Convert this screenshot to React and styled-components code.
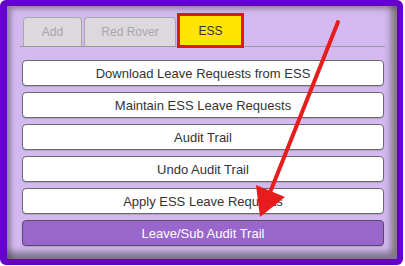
import React from "react";
import styled, { createGlobalStyle } from "styled-components";

const Global = createGlobalStyle`
  html, body { margin: 0; padding: 0; background: #ffffff; }
  body { font-family: "Liberation Sans", Arial, sans-serif; }
`;

const Frame = styled.div`
  position: relative;
  box-sizing: border-box;
  width: 403px;
  height: 265px;
  border: 6px solid #6600cc;
  border-left-width: 7px;
  border-radius: 6px;
  background: #d4b9f1;
  overflow: hidden;
`;

const Panel = styled.div`
  box-sizing: border-box;
  height: 100%;
  padding: 8px 12px 0 13px;
  box-shadow: inset 5px 4px 5px -1px rgba(60, 60, 60, 0.45),
    inset -7px -8px 6px -1px rgba(60, 60, 60, 0.55);
`;

const TabBar = styled.div`
  display: flex;
  align-items: flex-end;
  gap: 2px;
  padding-left: 3px;
  border-bottom: 1px solid #9a9a9a;
  height: 32px;
`;

const Tab = styled.div`
  box-sizing: border-box;
  width: ${(p) => p.$w}px;
  height: 29px;
  display: flex;
  align-items: center;
  justify-content: center;
  font-size: 12px;
  color: #a8a8a8;
  background: #dcd8de;
  border: 1px solid #a9a9a9;
  border-bottom: none;
  border-radius: 4px 4px 0 0;
`;

const ActiveTab = styled.div`
  box-sizing: border-box;
  width: 67px;
  height: 35px;
  margin-left: -1px;
  margin-bottom: -2px;
  display: flex;
  align-items: center;
  justify-content: center;
  font-size: 12px;
  color: #333;
  background: #ffe500;
  border: 3px solid #e2141c;
`;

const List = styled.div`
  display: flex;
  flex-direction: column;
  gap: 6px;
  padding: 13px 0 0 2px;
  width: 362px;
`;

const Button = styled.div`
  box-sizing: border-box;
  height: 26px;
  display: flex;
  align-items: center;
  justify-content: center;
  font-size: 13px;
  color: ${(p) => (p.$active ? "#ffffff" : "#333333")};
  background: ${(p) => (p.$active ? "#9966cc" : "#ffffff")};
  border: 1px solid ${(p) => (p.$active ? "#5a4a6a" : "#6a6a6a")};
  border-radius: 4px;
  box-shadow: 0 1px 1px rgba(0, 0, 0, 0.15);
`;

const Arrow = styled.svg`
  position: absolute;
  left: -7px;
  top: -6px;
  width: 405px;
  height: 266px;
  pointer-events: none;
`;

const items = [
  "Download Leave Requests from ESS",
  "Maintain ESS Leave Requests",
  "Audit Trail",
  "Undo Audit Trail",
  "Apply ESS Leave Requests",
];

export default function App() {
  return (
    <>
      <Global />
      <Frame>
        <Panel>
          <TabBar>
            <Tab $w={59}>Add</Tab>
            <Tab $w={92}>Red Rover</Tab>
            <ActiveTab>ESS</ActiveTab>
          </TabBar>
          <List>
            {items.map((t) => (
              <Button key={t}>{t}</Button>
            ))}
            <Button $active>Leave/Sub Audit Trail</Button>
          </List>
        </Panel>
        <Arrow viewBox="0 0 405 266">
          <line x1="338" y1="22" x2="271" y2="190" stroke="#e81c1c" strokeWidth="4" strokeLinecap="round" />
          <polygon points="260,217 256,185 285,197" fill="#e81c1c" />
        </Arrow>
      </Frame>
    </>
  );
}
